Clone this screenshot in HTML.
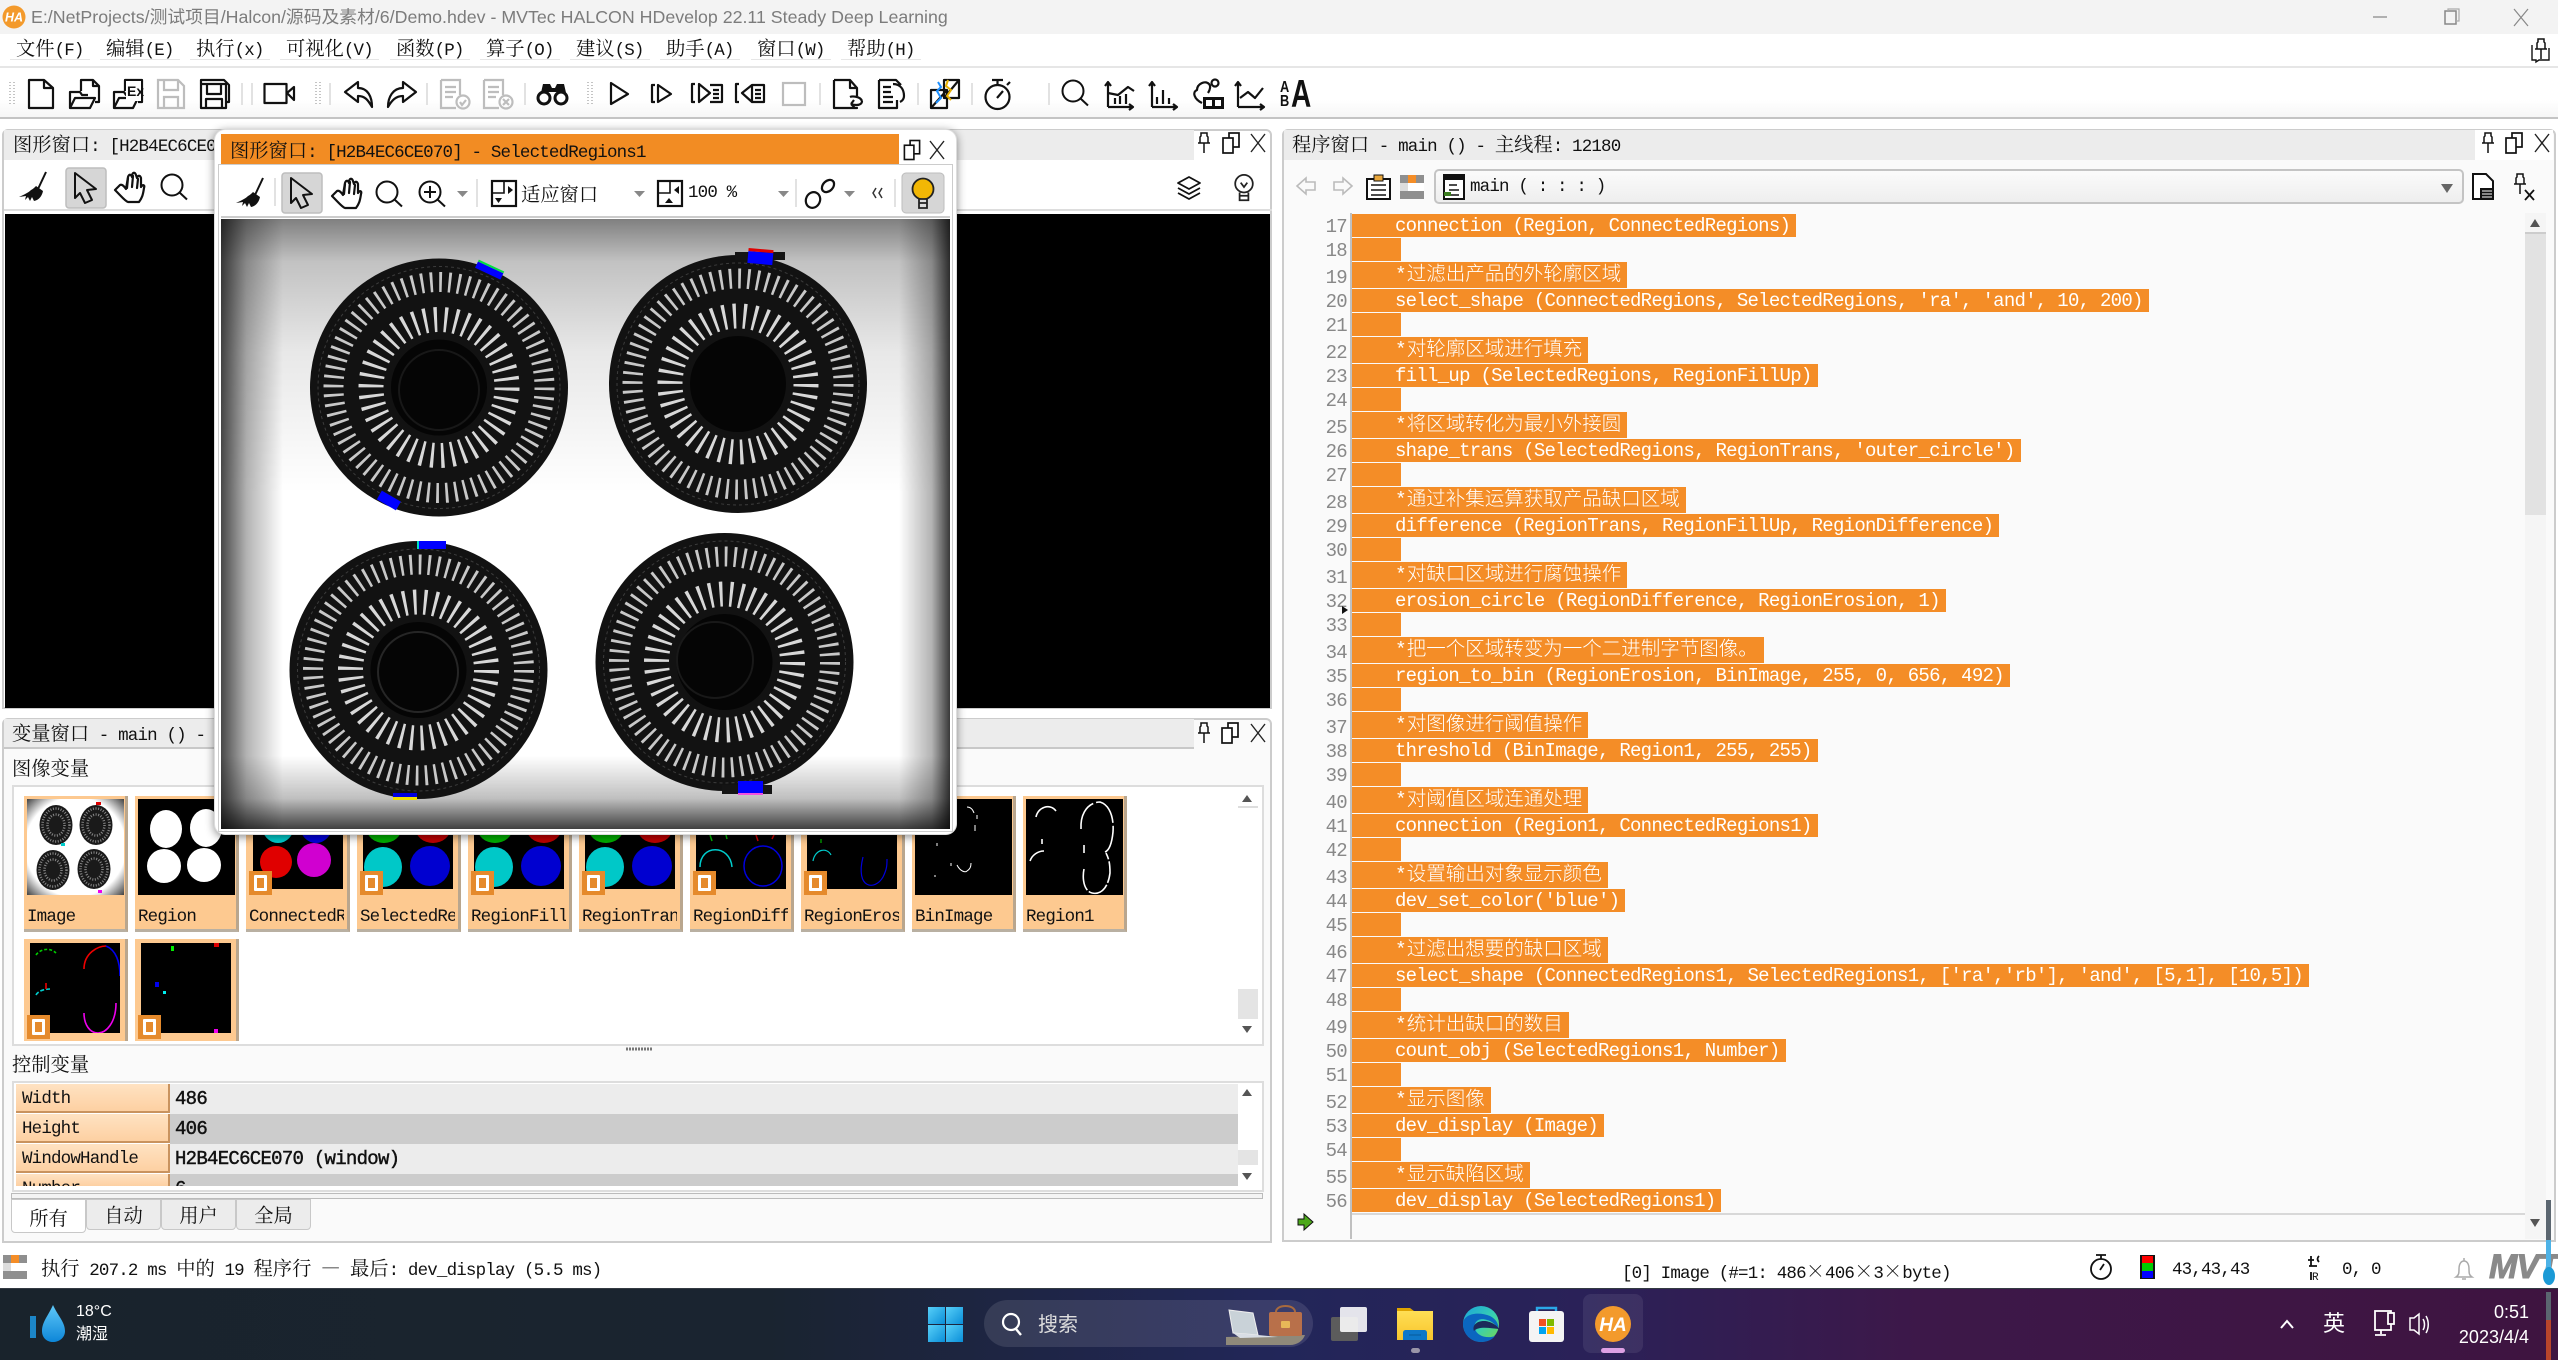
<!DOCTYPE html>
<html lang="zh"><head><meta charset="utf-8"><title>HDevelop</title>
<style>
html,body{margin:0;padding:0;width:2558px;height:1360px;overflow:hidden;background:#fff}
body{position:relative;font-family:"Liberation Mono","Noto Serif CJK SC",monospace;font-size:17.5px;letter-spacing:-.83px;color:#111}
div,span,svg{position:absolute;box-sizing:border-box}
svg{overflow:hidden;letter-spacing:0}
c{font-size:19.3px;letter-spacing:0;font-family:"Noto Serif CJK SC","Liberation Mono",serif}
.t{white-space:pre;line-height:24px;height:24px}
.ph{background:#ececec;height:30px}
.m{top:35px;height:25px;line-height:24px;white-space:pre;border-bottom:1px solid #e6e6e6;padding:0 6px}
.panel{background:#fafafa;border:2px solid #ccc;border-radius:6px 6px 0 0}
.th{background:#fdc990;width:104px;height:136px;border-right:3px solid #b9a68e;border-bottom:3px solid #b9b0a2;overflow:hidden}
.th span{left:3px;top:111px;width:95px;overflow:hidden;white-space:pre;line-height:20px;height:20px}
.bd{width:23px;height:24px;left:3px;background:#e58a2c}
.bd:after{content:"";position:absolute;left:5px;top:4px;width:13px;height:16px;border:3px solid #fff;border-radius:1px;box-sizing:border-box}
.nm{left:16px;width:154px;height:29px;background:linear-gradient(#ffe2c2,#fdd0a2);border-bottom:2px solid #c9935f;border-right:2px solid #c9935f;line-height:30px;padding-left:6px;white-space:pre}
.vl{left:170px;width:1068px;height:30px;font-size:19px;letter-spacing:-.72px;line-height:31px;padding-left:5px;white-space:pre;-webkit-text-stroke:.45px #111}
.tab{top:1199px;height:31px;width:75px;background:#ececec;border:1px solid #c8c8c8;border-radius:0 0 4px 4px;text-align:center;line-height:29px}
#code{left:1290px;top:214px;width:1230px;height:1000px}
.r{position:relative;height:24px;display:block}
.r i{position:absolute;left:0;top:0;width:57px;text-align:right;font-style:normal;color:#888;font-size:19px;letter-spacing:-.72px;line-height:26px;font-family:"Liberation Mono",monospace}
.r b{position:absolute;left:62px;top:0;height:23px;background:#f48d27;color:#fff;font-weight:normal;font-size:19px;letter-spacing:-.72px;line-height:25px;padding:0 6px 0 43px;white-space:pre;font-family:"Liberation Mono",monospace;overflow:hidden}
.cm{height:27px}
.cm i{line-height:32px}
.cm b{height:26px;font-size:19.5px;letter-spacing:0;line-height:26px;font-weight:300;font-family:"Liberation Mono","Noto Sans CJK SC",sans-serif}
.tb{color:#fff;letter-spacing:0;font-family:"Liberation Sans","Noto Sans CJK SC",sans-serif;white-space:pre}
</style></head><body>

<!-- title bar -->
<div style="left:0;top:0;width:2558px;height:34px;background:#f3f3f3"></div>
<svg style="left:2px;top:5px" width="24" height="24" viewBox="0 0 24 24"><circle cx="12" cy="12" r="11.5" fill="#f39a2c"/><text x="12" y="16.5" font-family="Liberation Sans" font-size="12.5" font-weight="bold" font-style="italic" fill="#fff" text-anchor="middle">HA</text></svg>
<div class="t" style="left:31px;top:5px;letter-spacing:0;font-family:'Liberation Sans','Noto Sans CJK SC',sans-serif;font-size:17.8px;color:#7c7c7c">E:/NetProjects/测试项目/Halcon/源码及素材/6/Demo.hdev - MVTec HALCON HDevelop 22.11 Steady Deep Learning</div>

<!-- menu -->
<div class="m" style="left:10px"><c>文件</c>(F)</div>
<div class="m" style="left:100px"><c>编辑</c>(E)</div>
<div class="m" style="left:190px"><c>执行</c>(x)</div>
<div class="m" style="left:280px"><c>可视化</c>(V)</div>
<div class="m" style="left:390px"><c>函数</c>(P)</div>
<div class="m" style="left:480px"><c>算子</c>(O)</div>
<div class="m" style="left:570px"><c>建议</c>(S)</div>
<div class="m" style="left:660px"><c>助手</c>(A)</div>
<div class="m" style="left:751px"><c>窗口</c>(W)</div>
<div class="m" style="left:841px"><c>帮助</c>(H)</div>
<div style="left:0;top:66px;width:2558px;height:2px;background:#e6e6e6"></div>
<div style="left:0;top:100px;width:2558px;height:17px;background:linear-gradient(#fff,#f6f6f6)"></div>
<div style="left:0;top:117px;width:2558px;height:2px;background:#c4c4c4"></div>

<!-- graphics panel -->
<div class="panel" style="left:2px;top:129px;width:1270px;height:580px;background:#fff"></div>
<div class="ph" style="left:4px;top:130px;width:1190px"></div>
<div class="t" style="left:13px;top:131px"><c>图形窗口</c>: [H2B4EC6CE070]</div>
<div style="left:5px;top:214px;width:1265px;height:494px;background:#000"></div>
<div style="left:4px;top:209px;width:1268px;height:2px;background:#ddd"></div>

<!-- variable panel -->
<div class="panel" style="left:2px;top:718px;width:1270px;height:525px"></div>
<div class="ph" style="left:4px;top:719px;width:1190px;border-bottom:2px solid #c8c8c8"></div>
<div class="t" style="left:12px;top:720px"><c>变量窗口</c> - main () - </div>
<div class="t" style="left:12px;top:755px"><c>图像变量</c></div>
<div style="left:12px;top:785px;width:1252px;height:261px;background:#fff;border:2px solid #ddd"></div>
<div class="t" style="left:12px;top:1051px"><c>控制变量</c></div>
<div style="left:12px;top:1081px;width:1252px;height:111px;background:#fff;border:2px solid #ddd"></div>

<!-- image var thumbs -->
<div class="th" style="left:24px;top:796px"><span>Image</span>
<svg style="left:3px;top:3px" width="97" height="96" viewBox="0 0 97 96"><defs><radialGradient id="tv" cx=".5" cy=".5" r=".72"><stop offset=".72" stop-color="#fff"/><stop offset="1" stop-color="#333"/></radialGradient></defs><rect width="97" height="96" fill="url(#tv)"/>
<g fill="#1a1a1a"><ellipse cx="29" cy="26" rx="16.5" ry="20"/><ellipse cx="69" cy="26" rx="16.500" ry="20"/><ellipse cx="26" cy="71" rx="16.500" ry="20"/><ellipse cx="67" cy="70" rx="16.500" ry="20"/></g>
<g fill="none" stroke="#888" stroke-width="2.500" stroke-dasharray="1 1.6"><ellipse cx="29" cy="26" rx="13.500" ry="16.500"/><ellipse cx="69" cy="26" rx="13.500" ry="16.500"/><ellipse cx="26" cy="71" rx="13.500" ry="16.500"/><ellipse cx="67" cy="70" rx="13.500" ry="16.500"/><ellipse cx="29" cy="26" rx="8.500" ry="10.500"/><ellipse cx="69" cy="26" rx="8.500" ry="10.500"/><ellipse cx="26" cy="71" rx="8.500" ry="10.500"/><ellipse cx="67" cy="70" rx="8.500" ry="10.500"/></g>
<rect x="69" y="3" width="5" height="3" fill="#d00"/><rect x="34" y="44" width="4" height="3" fill="#0cc"/><rect x="71" y="91" width="4" height="3" fill="#e0e"/></svg></div>
<div class="th" style="left:135px;top:796px"><span>Region</span>
<svg style="left:3px;top:3px" width="97" height="96" viewBox="0 0 97 96"><rect width="97" height="96"/><g fill="#fff"><ellipse cx="28" cy="30" rx="16" ry="19"/><ellipse cx="68" cy="29" rx="16" ry="19"/><ellipse cx="26" cy="67" rx="17" ry="17"/><ellipse cx="66" cy="66" rx="17" ry="17"/></g></svg></div>

<div class="th" style="left:246px;top:796px"><span>ConnectedR</span>
<svg style="left:7px;top:3px" width="90" height="90" viewBox="0 0 90 90"><rect width="90" height="90"/><ellipse cx="25" cy="27" rx="16" ry="17" fill="#0cc"/><ellipse cx="63" cy="27" rx="16" ry="17" fill="#00d"/><ellipse cx="23" cy="63" rx="16" ry="16" fill="#e00000"/><ellipse cx="61" cy="61" rx="17" ry="17" fill="#d000d0"/></svg><div class="bd" style="top:75px"></div></div>
<div class="th" style="left:357px;top:796px"><span>SelectedRe</span>
<svg style="left:6px;top:3px" width="90" height="90" viewBox="0 0 90 90"><rect width="90" height="90"/><ellipse cx="21" cy="28" rx="18" ry="16" fill="#00b000"/><ellipse cx="70" cy="28" rx="18" ry="16" fill="#c00000"/><ellipse cx="20" cy="68" rx="19" ry="20" fill="#00c8c8"/><ellipse cx="67" cy="67" rx="20" ry="20" fill="#0000d0"/></svg><div class="bd" style="top:75px"></div></div>
<div class="th" style="left:468px;top:796px"><span>RegionFill</span>
<svg style="left:6px;top:3px" width="90" height="90" viewBox="0 0 90 90"><rect width="90" height="90"/><ellipse cx="21" cy="28" rx="18" ry="16" fill="#00b000"/><ellipse cx="70" cy="28" rx="18" ry="16" fill="#c00000"/><ellipse cx="20" cy="68" rx="19" ry="20" fill="#00c8c8"/><ellipse cx="67" cy="67" rx="20" ry="20" fill="#0000d0"/></svg><div class="bd" style="top:75px"></div></div>
<div class="th" style="left:579px;top:796px"><span>RegionTran</span>
<svg style="left:6px;top:3px" width="90" height="90" viewBox="0 0 90 90"><rect width="90" height="90"/><ellipse cx="21" cy="28" rx="18" ry="16" fill="#00b000"/><ellipse cx="70" cy="28" rx="18" ry="16" fill="#c00000"/><ellipse cx="20" cy="68" rx="19" ry="20" fill="#00c8c8"/><ellipse cx="67" cy="67" rx="20" ry="20" fill="#0000d0"/></svg><div class="bd" style="top:75px"></div></div>
<div class="th" style="left:690px;top:796px"><span>RegionDiff</span>
<svg style="left:6px;top:3px" width="90" height="90" viewBox="0 0 90 90"><rect width="90" height="90"/><g fill="none" stroke-width="1.5"><path d="M4 68C4 45 34 45 36 68" stroke="#0cc"/><ellipse cx="67" cy="67" rx="19" ry="20" stroke="#00d"/><path d="M14 36l2 6M30 36l1 4" stroke="#0b0"/><path d="M60 36l2 6M78 36l-2 4" stroke="#c00"/></g></svg><div class="bd" style="top:75px"></div></div>
<div class="th" style="left:801px;top:796px"><span>RegionEros</span>
<svg style="left:6px;top:3px" width="90" height="90" viewBox="0 0 90 90"><rect width="90" height="90"/><g fill="none" stroke-width="1.2"><path d="M6 62C8 50 20 48 24 56" stroke="#0cc"/><path d="M56 58C48 90 68 92 76 78C80 70 80 66 80 60" stroke="#00d"/><path d="M14 40v4" stroke="#0b0"/></g></svg><div class="bd" style="top:75px"></div></div>
<div class="th" style="left:912px;top:796px"><span>BinImage</span>
<svg style="left:3px;top:3px" width="97" height="96" viewBox="0 0 97 96"><rect width="97" height="96"/><g fill="none" stroke="#fff" stroke-width="1"><path d="M52 8c4 0 6 3 7 6M62 16v4M60 26v6"/><path d="M42 66c3 6 8 8 10 6 3-2 4-4 4-8M22 44v3M36 64v3M20 76v2"/></g></svg></div>
<div class="th" style="left:1023px;top:796px"><span>Region1</span>
<svg style="left:3px;top:3px" width="97" height="96" viewBox="0 0 97 96"><rect width="97" height="96"/><g fill="none" stroke="#fff" stroke-width="1.6"><path d="M10 18c2-10 14-14 20-6"/><path d="M55 30C54 10 66 3 74 3c10 3 14 16 13 30-1 10-3 18-8 20" stroke-dasharray="30 3"/><path d="M4 62c2-6 8-10 14-10"/><path d="M58 70c-2 10 0 22 8 24 8 2 16-4 18-20 0-6 0-12-4-20" stroke-dasharray="22 2"/><path d="M16 40v5M58 46v8"/></g></svg></div>
<div class="th" style="left:24px;top:939px;height:102px;border-bottom:0">
<svg style="left:6px;top:4px" width="90" height="90" viewBox="0 0 90 90"><rect width="90" height="90"/><g fill="none" stroke-width="1.6"><path d="M6 12c4-6 14-8 20-2" stroke="#0c0" stroke-dasharray="3 2"/><path d="M54 26C54 10 68 3 76 3" stroke="#e00"/><path d="M76 3c10 4 14 16 14 30" stroke="#00e"/><path d="M6 52c2-4 8-6 14-6" stroke="#0cc" stroke-dasharray="4 2"/><path d="M54 70c0 12 6 20 14 20 8 0 18-10 18-30" stroke="#e0e"/><path d="M16 40v6" stroke="#e00"/></g></svg><div class="bd" style="top:76px"></div></div>
<div class="th" style="left:135px;top:939px;height:102px;border-bottom:0">
<svg style="left:6px;top:4px" width="90" height="90" viewBox="0 0 90 90"><rect width="90" height="90"/><rect x="30" y="3" width="3" height="5" fill="#0e0"/><rect x="73" y="0" width="5" height="4" fill="#d00"/><rect x="14" y="39" width="4" height="5" fill="#00e"/><rect x="22" y="48" width="3" height="3" fill="#0ee"/><rect x="73" y="86" width="4" height="4" fill="#e0e"/></svg><div class="bd" style="top:76px"></div></div>

<!-- control vars -->
<div class="nm" style="top:1084px">Width</div><div class="vl" style="top:1084px;background:#ececec">486</div>
<div class="nm" style="top:1114px">Height</div><div class="vl" style="top:1114px;background:#ccc">406</div>
<div class="nm" style="top:1144px">WindowHandle</div><div class="vl" style="top:1144px;background:#ececec">H2B4EC6CE070 (window)</div>
<div class="nm" style="top:1174px;height:12px;overflow:hidden;border-bottom:0">Number</div><div class="vl" style="top:1174px;height:12px;overflow:hidden;background:#ccc">6</div>
<div style="left:11px;top:1193px;width:1252px;height:6px;border:1px solid #bbb;background:#f4f4f4"></div>
<div class="tab" style="left:11px;height:34px;background:#fff;z-index:2;line-height:34px"><c>所有</c></div>
<div class="tab" style="left:86px"><c>自动</c></div>
<div class="tab" style="left:161px"><c>用户</c></div>
<div class="tab" style="left:236px"><c>全局</c></div>

<!-- program panel -->
<div class="panel" style="left:1282px;top:129px;width:1274px;height:1113px"></div>
<div class="ph" style="left:1284px;top:130px;width:1191px"></div>
<div style="left:2475px;top:130px;width:78px;height:30px;background:#fff"></div>
<div class="t" style="left:1292px;top:131px"><c>程序窗口</c> - main () - <c>主线程</c>: 12180</div>
<div style="left:1434px;top:169px;width:1030px;height:35px;border:2px solid #c4c4c4;border-radius:5px;background:linear-gradient(#fbfbfb,#eee)"></div>
<div class="t" style="left:1470px;top:175px">main ( : : : )</div>

<div id="code">
<div class="r"><i>17</i><b>connection (Region, ConnectedRegions)</b></div>
<div class="r"><i>18</i><b></b></div>
<div class="r cm"><i>19</i><b>*过滤出产品的外轮廓区域</b></div>
<div class="r"><i>20</i><b>select_shape (ConnectedRegions, SelectedRegions, 'ra', 'and', 10, 200)</b></div>
<div class="r"><i>21</i><b></b></div>
<div class="r cm"><i>22</i><b>*对轮廓区域进行填充</b></div>
<div class="r"><i>23</i><b>fill_up (SelectedRegions, RegionFillUp)</b></div>
<div class="r"><i>24</i><b></b></div>
<div class="r cm"><i>25</i><b>*将区域转化为最小外接圆</b></div>
<div class="r"><i>26</i><b>shape_trans (SelectedRegions, RegionTrans, 'outer_circle')</b></div>
<div class="r"><i>27</i><b></b></div>
<div class="r cm"><i>28</i><b>*通过补集运算获取产品缺口区域</b></div>
<div class="r"><i>29</i><b>difference (RegionTrans, RegionFillUp, RegionDifference)</b></div>
<div class="r"><i>30</i><b></b></div>
<div class="r cm"><i>31</i><b>*对缺口区域进行腐蚀操作</b></div>
<div class="r"><i>32</i><b>erosion_circle (RegionDifference, RegionErosion, 1)</b></div>
<div class="r"><i>33</i><b></b></div>
<div class="r cm"><i>34</i><b>*把一个区域转变为一个二进制字节图像。</b></div>
<div class="r"><i>35</i><b>region_to_bin (RegionErosion, BinImage, 255, 0, 656, 492)</b></div>
<div class="r"><i>36</i><b></b></div>
<div class="r cm"><i>37</i><b>*对图像进行阈值操作</b></div>
<div class="r"><i>38</i><b>threshold (BinImage, Region1, 255, 255)</b></div>
<div class="r"><i>39</i><b></b></div>
<div class="r cm"><i>40</i><b>*对阈值区域连通处理</b></div>
<div class="r"><i>41</i><b>connection (Region1, ConnectedRegions1)</b></div>
<div class="r"><i>42</i><b></b></div>
<div class="r cm"><i>43</i><b>*设置输出对象显示颜色</b></div>
<div class="r"><i>44</i><b>dev_set_color('blue')</b></div>
<div class="r"><i>45</i><b></b></div>
<div class="r cm"><i>46</i><b>*过滤出想要的缺口区域</b></div>
<div class="r"><i>47</i><b>select_shape (ConnectedRegions1, SelectedRegions1, ['ra','rb'], 'and', [5,1], [10,5])</b></div>
<div class="r"><i>48</i><b></b></div>
<div class="r cm"><i>49</i><b>*统计出缺口的数目</b></div>
<div class="r"><i>50</i><b>count_obj (SelectedRegions1, Number)</b></div>
<div class="r"><i>51</i><b></b></div>
<div class="r cm"><i>52</i><b>*显示图像</b></div>
<div class="r"><i>53</i><b>dev_display (Image)</b></div>
<div class="r"><i>54</i><b></b></div>
<div class="r cm"><i>55</i><b>*显示缺陷区域</b></div>
<div class="r"><i>56</i><b>dev_display (SelectedRegions1)</b></div>
</div>
<div style="left:1350px;top:213px;width:2px;height:1026px;background:#c0c0c0"></div>
<div style="left:1352px;top:1213px;width:1173px;height:2px;background:#d8d8d8"></div>
<div style="left:2525px;top:213px;width:21px;height:1026px;background:#f5f5f5"></div>
<div style="left:2525px;top:233px;width:21px;height:282px;background:#e2e2e2"></div>

<!-- status bar text -->
<div class="t" style="left:41px;top:1255px"><c>执行</c> 207.2 ms <c>中的</c> 19 <c>程序行</c> <c>—</c> <c>最后</c>: dev_display (5.5 ms)</div>
<div class="t" style="left:1622px;top:1258px">[0] Image (#=1: 486<c>×</c>406<c>×</c>3<c>×</c>byte)</div>
<div class="t" style="left:2172px;top:1258px">43,43,43</div>
<div class="t" style="left:2342px;top:1258px">0, 0</div>
<div class="t" style="left:2489px;top:1252px;height:32px;width:69px;overflow:hidden;letter-spacing:-1px;font:italic bold 34px/30px 'Liberation Sans',sans-serif;color:#8a8a8a;-webkit-text-stroke:1px #8a8a8a">MVT</div>

<!-- base icons -->
<svg style="left:0;top:0" width="2558" height="1290" viewBox="0 0 2558 1290">
<defs>
<g id="pin" fill="none" stroke="#111" stroke-width="1.5"><path d="M-3-10h6v3l1 1v6h-8v-6l1-1zM0 0v10M-6 0h12"/></g>
<g id="rst" fill="#fff" stroke="#111" stroke-width="1.7"><rect x="-2" y="-10" width="10" height="14"/><rect x="-8" y="-5" width="10" height="15"/></g>
<g id="cls" fill="none" stroke="#222" stroke-width="1.4"><path d="M-7-9L7 9M7-9L-7 9"/></g>
<g id="broom"><path d="M15 0L7 17" stroke="#111" stroke-width="2" fill="none"/><path d="M5 14L12 19C11 24 8 28 3 29L1 25L-1 29L-3 25L-6 28L-5 24L-12 25C-8 23-3 21 0 18C2 17 3 16 5 14Z" fill="#111"/></g>
<g id="sel"><rect x="-20" y="-20" width="40" height="40" rx="3" fill="#d6d6d6" stroke="#bdbdbd" stroke-width="1.5"/><path d="M-11-15L10 1L1 2L6 12L-1 15L-6 5L-11 10Z" fill="#fff" stroke="#111" stroke-width="2" stroke-linejoin="round" fill-opacity="0"/></g>
<g id="hand" fill="none" stroke="#111" stroke-width="2.2" stroke-linejoin="round" stroke-linecap="round"><path d="M-15 3L-10-2C-8-3-6-1-4 2L-2-10C-1-13 1-13 2-10L2-12C3-15 5-15 6-12L7-9C8-12 10-12 11-9L11 0C13-3 15-2 14 1C13 8 12 11 9 15H-2C-5 14-8 10-15 3Z"/><path d="M-2-9L-3 1M3-11L2 0M8-8L7 1"/></g>
<g id="mag" fill="none" stroke="#111" stroke-width="2"><circle r="10.5"/><path d="M7.5 7.5L15 14.5"/></g>
<g id="bulb"><rect x="-21" y="-20" width="42" height="40" rx="4" fill="#d6d6d6" stroke="#bdbdbd"/><circle cy="-4" r="10.5" fill="#f2b705" stroke="#222" stroke-width="1.8"/><path d="M-4 6h8v9h-8zM-4 10h8" fill="#ddd" stroke="#222" stroke-width="1.8"/></g>
<g id="bulb0" fill="none" stroke="#222" stroke-width="1.6"><circle cy="-3" r="8"/><path d="M-4 5v7h8v-7M-4 8h8M-3-4l3 4 3-4"/></g>
<g id="grid"><rect width="24" height="24" fill="#8f8f8f"/><rect x="8" width="8" height="24" fill="#fff"/><rect x="8" width="8" height="8" fill="#f48d27"/><rect y="8" width="24" height="8" fill="#fff"/><rect x="8" y="16" width="8" height="8" fill="#8f8f8f"/><rect x="0" y="8" width="8" height="8" fill="#ddd"/></g>
</defs>

<!-- window controls -->
<path d="M2373 17h14" stroke="#999" stroke-width="1.5"/>
<rect x="2445" y="11" width="11" height="13" fill="none" stroke="#888" stroke-width="1.5"/><path d="M2448 11v-2h11v12h-3" fill="none" stroke="#aaa" stroke-width="1.2"/>
<path d="M2514 9l14 17M2528 9l-14 17" stroke="#888" stroke-width="1.2"/>
<use href="#pin" transform="translate(2541 49)"/><path d="M2532 45v15h4v2l3-2h10v-12" fill="none" stroke="#111" stroke-width="1.4"/>

<!-- toolbar -->
<g fill="none" stroke="#c4c4c4" stroke-width="2" stroke-dasharray="1 2"><path d="M10 82v24M14 82v24M316 82v24M320 82v24M588 82v24M592 82v24"/></g>
<g stroke="#e2e2e2" stroke-width="2"><path d="M242 83v22M252 83v22M330 83v22M427 83v22M525 83v22M820 83v22M918 83v22M972 83v22M1049 83v22"/></g>
<g fill="none" stroke="#111" stroke-width="2.2" stroke-linejoin="round">
<path d="M29 80H44L53 88V108H29Z"/><path d="M44 80V88H53"/>
<!-- open -->
<path d="M81 91V80H93L99 86V102H95"/><path d="M93 80v6h6"/><path d="M70 108V92H80L82 95H88M70 108L75 98H95L90 108Z"/>
<!-- open ex -->
<path d="M125 91V80H142V102H138"/><path d="M114 108V92H124L126 95H132M114 108L119 98H138L133 108Z"/>
<path d="M201 84V80H224L229 85V102H225"/><rect x="201" y="84" width="25" height="24" fill="#fff"/><path d="M207 84V94H221V84M206 108V99H222V108"/>
<rect x="264.500" y="84" width="22" height="19"/><path d="M287 93L294 87V100Z"/>
<path d="M345 92L358 82V88C368 88 372 97 372 107C368 100 365 96 358 96V102Z"/>
<path d="M416 92L403 82V88C393 88 388 97 388 107C392 100 396 96 403 96V102Z"/>
<path d="M611 83L628 94L611 104Z"/>
<path d="M655 85H652V102H655M658 85L671 94L658 102Z"/>
<path d="M695 84H692V102H695M699 84L710 93L699 102ZM710 85H722V102H710M713 90H719M713 94H719M713 98H719"/>
<path d="M739 84H736V102H739M752 85L742 93L752 102ZM752 85H764V102H752M755 90H761M755 94H761M755 98H761"/>
<path d="M834 80H850L857 88V96M857 108H834ZM850 80V88H857M834 108V80"/><path d="M862 101C862 105 857 106 851 104M851 104L854 100M851 104L855 108M862 101C860 96 852 96 850 97"/>
<path d="M879 80H896L901 85M879 80V108H897V100M883 87h8M883 92h8M883 97h10M883 102h10M893 84C901 84 904 90 904 96C904 99 902 101 900 102"/>
<rect x="931" y="90" width="16" height="18"/><rect x="944" y="80" width="15" height="18"/><path d="M931 108L947 90M944 98L959 80"/>
<circle cx="997.500" cy="97" r="12"/><path d="M992 80H1003M997.500 80V85M1007 85L1010 82M997 98L1003 91"/>
<path d="M1108 107V82M1105 86L1108 82L1111 86M1108 107H1133M1129 104L1133 107L1129 110"/>
<path d="M1108 93L1118 95L1128 87L1134 91M1115 104V98M1120 104V96M1126 104V94"/>
<path d="M1152 107V82M1149 86L1152 82L1155 86M1152 107H1177M1173 104L1177 107L1173 110M1157 104V97M1163 104V90M1169 104V98"/>
<path d="M1202 103C1194 99 1192 92 1197 90C1197 84 1205 80 1209 84C1211 86 1210 90 1208 93"/><circle cx="1215" cy="83" r="3.500"/>
<path d="M1238 107V82M1235 86L1238 82L1241 86M1238 107H1264M1260 104L1264 107L1260 110M1240 98L1248 92L1255 98L1263 88"/>
</g>
<rect x="1203" y="97" width="21" height="12" fill="#111"/><rect x="1206" y="100" width="6" height="6" fill="#fff"/><rect x="1215" y="100" width="6" height="6" fill="#fff"/>
<use href="#mag" transform="translate(1073 91)"/>
<text transform="translate(1280 92) scale(.8 1)" font-family="Liberation Sans" font-size="16" font-weight="bold" fill="#111">A</text><text transform="translate(1280 106) scale(.8 1)" font-family="Liberation Sans" font-size="16" font-weight="bold" fill="#111">B</text>
<text transform="translate(1291 107) scale(.72 1)" font-family="Liberation Sans" font-size="39" font-weight="bold" fill="#111">A</text>
<rect x="126" y="81" width="15" height="20" fill="#fff"/><text x="127" y="96" font-family="Liberation Sans" font-size="14" font-weight="bold" fill="#111">Ex</text>
<g fill="none" stroke="#bdbdbd" stroke-width="2.2"><path d="M158 80H178L184 86V108H158ZM164 80V90H178V80M164 108V97H178V108"/><rect x="783" y="83" width="22" height="22"/>
<path d="M441 80H460V95M441 80V108H456M445 87h11M445 92h11M445 97h8"/><circle cx="463" cy="102" r="6.500"/><path d="M460 102l2 3 4-5"/>
<path d="M484 80H503V95M484 80V108H499M488 87h11M488 92h11M488 97h8"/><circle cx="506" cy="102" r="6.500"/><path d="M503 99l6 6M509 99l-6 6"/></g>
<!-- binoculars -->
<path d="M540 97L543 84H550L552 88H555L557 84H564L567 97L560 92H547Z" fill="#111"/><circle cx="544" cy="98" r="6" fill="#fff" stroke="#111" stroke-width="3"/><circle cx="561" cy="98" r="6" fill="#fff" stroke="#111" stroke-width="3"/>
<path d="M938 82L941 87L937 91L941 98L936 103" fill="none" stroke="#1e90ff" stroke-width="2"/><path d="M948 80L946 86L951 90L947 96L951 100" fill="none" stroke="#e8b000" stroke-width="2"/>

<!-- graphics panel header + tools -->
<use href="#pin" transform="translate(1204 143)"/><use href="#rst" transform="translate(1231 143)"/><use href="#cls" transform="translate(1258 143)"/>
<use href="#broom" transform="translate(31 172)"/>
<use href="#sel" transform="translate(86 188)"/>
<use href="#hand" transform="translate(130 187)"/>
<use href="#mag" transform="translate(172 185)"/>
<path d="M1178 183l11-6 11 6-11 6zM1178 188l11 6 11-6M1178 193l11 6 11-6" fill="#fff" stroke="#111" stroke-width="1.8" stroke-linejoin="round"/>
<use href="#bulb0" transform="translate(1244 187) scale(1.1)"/>
<!-- variable panel header -->
<use href="#pin" transform="translate(1204 733)"/><use href="#rst" transform="translate(1230 733)"/><use href="#cls" transform="translate(1258 733)"/>
<!-- scrollbars -->
<path d="M1242 802l5-7 5 7z" fill="#555"/><rect x="1238" y="806" width="20" height="2" fill="#ddd"/><rect x="1238" y="989" width="20" height="30" fill="#e4e4e4"/><path d="M1242 1026l5 7 5-7z" fill="#555"/>
<path d="M1242 1096l5-7 5 7z" fill="#555"/><rect x="1238" y="1150" width="20" height="15" fill="#e4e4e4"/><path d="M1242 1173l5 7 5-7z" fill="#555"/>
<!-- handle -->
<path d="M626 1049h26" stroke="#777" stroke-width="3" stroke-dasharray="2 1"/>

<!-- program panel header -->
<use href="#pin" transform="translate(2488 143)"/><use href="#rst" transform="translate(2514 143)"/><use href="#cls" transform="translate(2542 143)"/>
<g fill="none" stroke="#bbb" stroke-width="1.6"><path d="M1297 186l9-8v4h9v8h-9v4z"/><path d="M1352 186l-9-8v4h-9v8h9v4z"/></g>
<rect x="1367" y="179" width="23" height="20" fill="#fff" stroke="#111" stroke-width="2"/><rect x="1374" y="175" width="9" height="6" fill="#e9a63a" stroke="#111"/><path d="M1371 185h15M1371 190h15M1371 195h15" stroke="#111" stroke-width="1.6"/>
<use href="#grid" transform="translate(1400 175)"/>
<rect x="1444" y="175" width="20" height="24" fill="#fff" stroke="#111" stroke-width="2"/><rect x="1444" y="175" width="20" height="5" fill="#111"/><path d="M1449 185h8M1449 190h10M1449 195h10" stroke="#111" stroke-width="1.4"/><rect x="1444" y="192" width="7" height="4" fill="#3a7d1e"/>
<path d="M2441 184h12l-6 9z" fill="#666"/>
<path d="M2473 174H2486L2493 181V199H2473Z" fill="#fff" stroke="#111" stroke-width="2"/><rect x="2480" y="188" width="14" height="11" fill="#111"/><path d="M2482 191h10M2482 194h10M2482 197h10" stroke="#fff"/>
<use href="#pin" transform="translate(2520 184)"/><path d="M2525 190l9 10M2534 190l-9 10" stroke="#111" stroke-width="1.8"/>
<path d="M2530 227l5-8 5 8z" fill="#555"/><path d="M2530 1219h10l-5 8z" fill="#555"/>
<rect x="2525" y="232" width="21" height="2" fill="#ccc"/>
<path d="M1342 606l6 4-6 4z" fill="#111"/>
<path d="M1298 1219h6v-5l9 8-9 8v-5h-6z" fill="#4ca81a" stroke="#111"/>

<!-- status -->
<use href="#grid" transform="translate(3 1255)"/>
<g fill="none" stroke="#111" stroke-width="1.8"><circle cx="2101" cy="1269" r="10"/><path d="M2096 1255h10M2101 1255v4M2100 1270l4-6"/><path d="M2311 1256v10M2308 1260l6 0M2319 1256c-2 2-2 4 0 6M2317 1266h-8M2311 1272v8"/></g>
<rect x="2140" y="1255" width="15" height="24" fill="#111"/><rect x="2142" y="1256" width="11" height="7" fill="#f00"/><rect x="2142" y="1263" width="11" height="8" fill="#0c0"/><rect x="2142" y="1271" width="11" height="7" fill="#00f"/>
<text x="2312" y="1280" font-family="Liberation Mono" font-size="11" fill="#111">R</text>
<path d="M2456 1277c3-2 3-4 3-8 0-5 2-8 5-8s5 3 5 8c0 4 0 6 3 8zM2462 1279h4M2464 1258v3" fill="#fff" stroke="#aaa" stroke-width="1.5"/>
<rect x="2546" y="1200" width="5" height="40" fill="#5b6670"/><rect x="2546" y="1240" width="5" height="36" fill="#4db2e6"/><ellipse cx="2549" cy="1276" rx="6" ry="9" fill="#1b9ad6"/>
</svg>

<!-- floating window -->
<div style="left:214px;top:129px;width:743px;height:706px;background:#fff;border-radius:11px;box-shadow:0 2px 9px rgba(0,0,0,.45);border:1px solid #ddd"></div>
<div style="left:221px;top:134px;width:678px;height:30px;background:#f28c23"></div>
<div class="t" style="left:230px;top:137px"><c>图形窗口</c>: [H2B4EC6CE070] - SelectedRegions1</div>
<div style="left:218px;top:164px;width:735px;height:668px;border:1px solid #ccc"></div>
<div style="left:221px;top:216px;width:729px;height:2px;background:#ccc"></div>
<div class="t" style="left:521px;top:181px"><c>适应窗口</c></div>
<div class="t" style="left:688px;top:181px">100 %</div>
<svg style="left:214px;top:129px" width="743" height="91" viewBox="214 129 743 91">
<use href="#rst" transform="translate(912 150) scale(.95)"/><use href="#cls" transform="translate(937 150)"/>
<use href="#broom" transform="translate(248 178)"/>
<path d="M275 178v28" stroke="#e2e2e2" stroke-width="2"/>
<use href="#sel" transform="translate(302 193)"/>
<use href="#hand" transform="translate(347 193)"/>
<use href="#mag" transform="translate(387 192)"/>
<use href="#mag" transform="translate(430 192)"/>
<path d="M424 192h12M430 186v12" stroke="#111" stroke-width="2"/>
<path d="M457 191h11l-5.500 6z" fill="#888"/>
<path d="M477 179v28M796 179v28M895 179v28" stroke="#e2e2e2" stroke-width="2"/>
<rect x="492" y="181" width="24" height="25" fill="none" stroke="#111" stroke-width="2.2"/><path d="M504 181v12H492" fill="none" stroke="#111" stroke-width="1.600"/><path d="M508 186l5 4-5 4zM495 198h7l-3.500 5z" fill="#111"/>
<path d="M634 191h11l-5.500 6z" fill="#888"/>
<rect x="658" y="181" width="24" height="25" fill="none" stroke="#111" stroke-width="2.2"/><path d="M670 181v12H658" fill="none" stroke="#111" stroke-width="1.600"/><path d="M679 186l-5 4 5 4zM665 203h8l-4-5z" fill="#111"/>
<path d="M778 191h11l-5.500 6z" fill="#888"/>
<g fill="none" stroke="#111" stroke-width="2.2"><ellipse cx="813" cy="200" rx="7" ry="8" transform="rotate(25 813 200)"/><ellipse cx="828" cy="186" rx="5" ry="7" transform="rotate(45 828 186)"/></g>
<path d="M844 191h11l-5.500 6z" fill="#888"/>
<path d="M876 188l-3 5 3 5M882 188l-3 5 3 5" fill="none" stroke="#333" stroke-width="1.500"/>
<use href="#bulb" transform="translate(923 193)"/>
</svg>

<!-- image -->
<svg style="left:221px;top:219px" width="729" height="610" viewBox="221 219 729 610">
<defs>
<linearGradient id="gt" x1="0" y1="0" x2="0" y2="1"><stop offset="0" stop-color="#000" stop-opacity=".5"/><stop offset=".07" stop-color="#000" stop-opacity=".24"/><stop offset=".22" stop-color="#000" stop-opacity=".09"/><stop offset=".45" stop-color="#000" stop-opacity="0"/><stop offset=".88" stop-color="#000" stop-opacity="0"/><stop offset=".95" stop-color="#000" stop-opacity=".25"/><stop offset="1" stop-color="#000" stop-opacity=".75"/></linearGradient>
<linearGradient id="gl" x1="0" y1="0" x2="1" y2="0"><stop offset="0" stop-color="#000" stop-opacity=".72"/><stop offset=".035" stop-color="#000" stop-opacity=".3"/><stop offset=".085" stop-color="#000" stop-opacity="0"/><stop offset=".93" stop-color="#000" stop-opacity="0"/><stop offset=".975" stop-color="#000" stop-opacity=".3"/><stop offset="1" stop-color="#000" stop-opacity=".78"/></linearGradient>
<g id="wheel">
<circle r="129" fill="#121212"/>
<circle r="121" fill="none" stroke="#3c3c3c" stroke-width="1" stroke-dasharray="3 3"/>
<circle r="105.500" fill="none" stroke="#c8c8c8" stroke-width="20" stroke-dasharray="2.700 6.507"/>
<circle r="68" fill="none" stroke="#d8d8d8" stroke-width="25" stroke-dasharray="3 7.174"/>
<circle r="48" fill="#050505"/>
</g>
</defs>
<rect x="221" y="219" width="729" height="610" fill="#fff"/>
<rect x="221" y="219" width="729" height="610" fill="url(#gt)"/>
<rect x="221" y="219" width="729" height="610" fill="url(#gl)"/>
<use href="#wheel" transform="translate(439 387.500)"/>
<use href="#wheel" transform="translate(738 384)"/>
<use href="#wheel" transform="translate(418.500 670)"/>
<use href="#wheel" transform="translate(724.500 662)"/>
<circle cx="418" cy="672" r="40" fill="none" stroke="#262626" stroke-width="2"/><circle cx="715" cy="660" r="38" fill="none" stroke="#191919" stroke-width="2"/><circle cx="439" cy="390" r="40" fill="none" stroke="#181818" stroke-width="2"/>
<!-- defects -->
<g transform="rotate(25 489 271)"><rect x="475" y="267" width="28" height="7" fill="#0000ff"/><rect x="475" y="265" width="28" height="2" fill="#00e040"/></g>
<g transform="rotate(30 388 500)"><rect x="378" y="495" width="22" height="10" fill="#0000ff"/></g>
<rect x="735" y="252" width="50" height="8" fill="#141414"/><g transform="rotate(5 760 256)"><rect x="748" y="252" width="25" height="12" fill="#0000ff"/><rect x="748" y="249" width="25" height="3" fill="#e00000"/></g>
<rect x="418" y="541" width="28" height="8" fill="#0000ff"/><rect x="417" y="541" width="2" height="8" fill="#00e0c0"/>
<rect x="393" y="793" width="24" height="4" fill="#0000e0"/><rect x="393" y="797" width="24" height="3" fill="#f0e000"/>
<rect x="722" y="785" width="50" height="9" fill="#141414"/><rect x="738" y="781" width="25" height="12" fill="#0000ff"/><rect x="738" y="793" width="25" height="2" fill="#f050e0"/>
</svg>

<!-- taskbar -->
<div style="left:0;top:1288px;width:2558px;height:72px;background:linear-gradient(90deg,#19232c 0,#1a2430 30%,#222659 50%,#2a2158 62%,#3d1849 75%,#3e1440 100%);border-top:1px solid #333a42"></div>
<svg style="left:0;top:1288px" width="2558" height="72" viewBox="0 1288 2558 72">
<defs>
<linearGradient id="w1" x1="0" y1="0" x2="1" y2="1"><stop offset="0" stop-color="#58d0f8"/><stop offset="1" stop-color="#0a8ed8"/></linearGradient>
<linearGradient id="dr" x1="0" y1="0" x2="0" y2="1"><stop offset="0" stop-color="#5fc8f8"/><stop offset="1" stop-color="#0d86d8"/></linearGradient>
<linearGradient id="fo" x1="0" y1="0" x2="0" y2="1"><stop offset="0" stop-color="#ffdf55"/><stop offset="1" stop-color="#f8c52c"/></linearGradient>
<linearGradient id="ed" x1="0" y1="0" x2="1" y2="1"><stop offset="0" stop-color="#1aa3dc"/><stop offset=".55" stop-color="#38d0b0"/><stop offset="1" stop-color="#7ad84a"/></linearGradient>
</defs>
<rect x="30" y="1316" width="6" height="22" fill="#1c86c8"/>
<path d="M53 1305C48 1316 42 1322 42 1331C42 1338 47 1342 53 1342C59 1342 65 1338 65 1331C65 1322 58 1316 53 1305Z" fill="url(#dr)"/>
<rect x="928" y="1307" width="17" height="17" fill="url(#w1)"/><rect x="946" y="1307" width="17" height="17" fill="url(#w1)"/><rect x="928" y="1325" width="17" height="17" fill="url(#w1)"/><rect x="946" y="1325" width="17" height="17" fill="url(#w1)"/>
<rect x="984" y="1300" width="329" height="47" rx="23.500" fill="#fff" fill-opacity=".11"/>
<circle cx="1011" cy="1322" r="8" fill="none" stroke="#fff" stroke-width="2.2"/><path d="M1016 1329l5 6" stroke="#fff" stroke-width="2.4"/>
<!-- laptop + case -->
<path d="M1226 1337L1305 1335C1303 1341 1297 1345 1290 1345H1226Z" fill="#8f897a"/>
<path d="M1229 1310L1253 1313L1258 1335L1233 1333Z" fill="#c9d2d8" stroke="#eee"/><path d="M1233 1333L1258 1335L1278 1337L1240 1338Z" fill="#d8dde4"/>
<rect x="1269" y="1312" width="33" height="24" rx="2" fill="#b8704a"/><path d="M1276 1312C1276 1304 1295 1304 1295 1312" fill="none" stroke="#a86a3e" stroke-width="2"/><rect x="1281" y="1321" width="9" height="7" rx="1" fill="#e8b858"/>
<!-- task view -->
<rect x="1331" y="1317" width="27" height="24" rx="2" fill="#5c5c5c"/>
<rect x="1340" y="1307" width="27" height="25" rx="2" fill="#fff" fill-opacity=".88"/>
<!-- explorer -->
<path d="M1397 1308H1410L1414 1311H1433V1316H1397Z" fill="#dfa400"/><rect x="1397" y="1311" width="36" height="29" fill="url(#fo)"/><path d="M1403 1340V1333C1403 1331 1404 1330 1406 1330H1424C1426 1330 1427 1331 1427 1333V1340Z" fill="#0f78c8"/><path d="M1409 1335h12" stroke="#075a9a" stroke-width="1"/>
<rect x="1411" y="1348" width="9" height="5" rx="2.500" fill="#9a95a8"/>
<!-- edge -->
<circle cx="1481" cy="1324" r="18" fill="url(#ed)"/><path d="M1463 1324C1463 1334 1471 1342 1481 1342C1487 1342 1492 1340 1495 1336C1487 1339 1477 1336 1475 1329C1473 1322 1479 1317 1487 1320C1492 1321 1496 1325 1498 1329C1499 1324 1496 1319 1490 1316C1478 1311 1463 1314 1463 1324Z" fill="#0b66c0"/><path d="M1474 1331C1478 1326 1490 1328 1499 1329C1497 1325 1490 1321 1484 1321C1476 1321 1472 1326 1474 1331Z" fill="#1c2a5a"/>
<!-- store -->
<path d="M1537 1314v-6h19v6" fill="none" stroke="#2aa8e8" stroke-width="2.400"/><rect x="1529" y="1311" width="35" height="31" rx="3" fill="#f4f4f4"/><rect x="1539" y="1319" width="7" height="7" fill="#f25022"/><rect x="1547" y="1319" width="7" height="7" fill="#7fba00"/><rect x="1539" y="1327" width="7" height="7" fill="#00a4ef"/><rect x="1547" y="1327" width="7" height="7" fill="#ffb900"/>
<!-- HA -->
<rect x="1583" y="1294" width="60" height="59" rx="8" fill="#fff" fill-opacity=".08"/>
<circle cx="1613" cy="1324" r="18" fill="#f39a2c"/><text x="1613" y="1331" font-family="Liberation Sans" font-size="19" font-weight="bold" font-style="italic" fill="#fff" text-anchor="middle">HA</text>
<rect x="1601" y="1348" width="24" height="5" rx="2.500" fill="#dda0e4"/>
<!-- tray -->
<path d="M2281 1328l6-7 6 7" fill="none" stroke="#fff" stroke-width="2"/>
<g fill="none" stroke="#fff" stroke-width="1.8"><rect x="2375" y="1311" width="16" height="19"/><path d="M2381 1330v4M2375 1335h11"/><rect x="2388" y="1313" width="6" height="11" fill="#3e1440"/></g>
<path d="M2410 1318h4l5-4v20l-5-4h-4zM2423 1319c2 3 2 8 0 11M2426 1316c3 5 3 12 0 17" fill="none" stroke="#fff" stroke-width="1.500"/>
<rect x="2546" y="1292" width="5" height="28" fill="#5b6670"/><rect x="2546" y="1320" width="5" height="40" fill="#b8452a"/>
</svg>
<div class="tb" style="left:76px;top:1301px;font-size:16px;line-height:22px">18°C</div>
<div class="tb" style="left:76px;top:1324px;font-size:16px;line-height:22px">潮湿</div>
<div class="tb" style="left:1038px;top:1312px;font-size:20px;line-height:26px;color:#ddd">搜索</div>
<div class="tb" style="left:2323px;top:1311px;font-size:22px;line-height:26px">英</div>
<div class="tb" style="left:2429px;width:100px;text-align:right;top:1301px;font-size:18px;line-height:22px">0:51</div>
<div class="tb" style="left:2429px;width:100px;text-align:right;top:1326px;font-size:18px;line-height:22px">2023/4/4</div>
</body></html>
